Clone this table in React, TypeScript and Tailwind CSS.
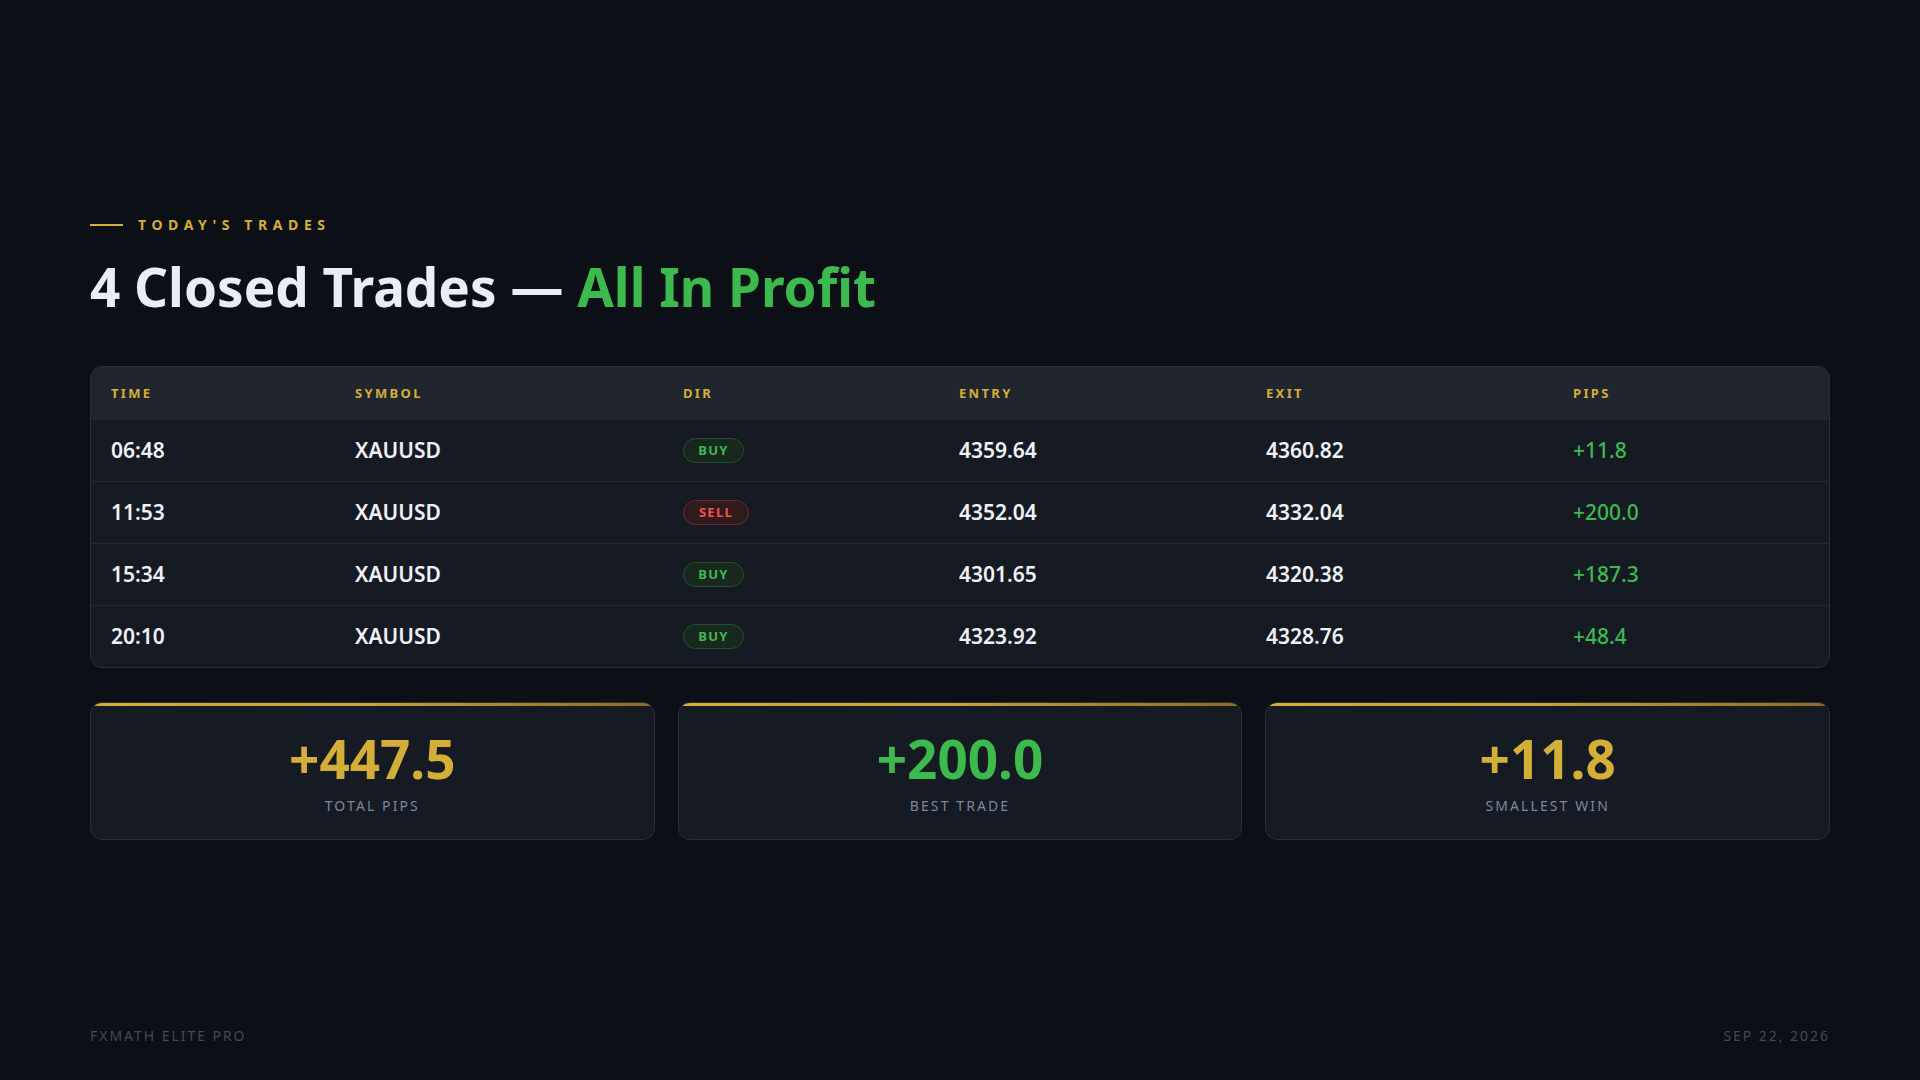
import React from "react";

type Trade = {
  time: string;
  symbol: string;
  dir: "BUY" | "SELL";
  entry: string;
  exit: string;
  pips: string;
};

const trades: Trade[] = [
  { time: "06:48", symbol: "XAUUSD", dir: "BUY", entry: "4359.64", exit: "4360.82", pips: "+11.8" },
  { time: "11:53", symbol: "XAUUSD", dir: "SELL", entry: "4352.04", exit: "4332.04", pips: "+200.0" },
  { time: "15:34", symbol: "XAUUSD", dir: "BUY", entry: "4301.65", exit: "4320.38", pips: "+187.3" },
  { time: "20:10", symbol: "XAUUSD", dir: "BUY", entry: "4323.92", exit: "4328.76", pips: "+48.4" },
];

const cols = "grid grid-cols-[244px_328px_276px_307px_307px_1fr] px-5";

const DirPill = ({ dir }: { dir: Trade["dir"] }) =>
  dir === "BUY" ? (
    <span className="flex h-[25px] w-[61px] items-center justify-center rounded-full border border-[#24502f] bg-[#17291e] text-[13px] font-bold tracking-[0.1em] text-[#3fb950]">
      BUY
    </span>
  ) : (
    <span className="flex h-[25px] w-[66px] items-center justify-center rounded-full border border-[#6a2a2d] bg-[#2f1a1d] text-[13px] font-bold tracking-[0.1em] text-[#f85149]">
      SELL
    </span>
  );

const StatCard = ({ value, label, color }: { value: string; label: string; color: string }) => (
  <div className="relative flex h-[138px] flex-col items-center justify-center overflow-hidden rounded-xl border border-[#282d37] bg-[#161a22] pt-[6px]">
    <div className="absolute inset-x-0 top-0 h-[3px] bg-gradient-to-r from-[#d4af37] via-[#c9a232] to-[#8a6d1f]" />
    <div className={`text-[53px] leading-none font-bold ${color}`}>{value}</div>
    <div className="mt-[10px] text-[14px] tracking-[0.15em] text-[#7d889b]">{label}</div>
  </div>
);

export default function App() {
  return (
    <div className="flex h-[1080px] w-[1920px] flex-col bg-[#0c0f16] px-[90px] font-['Noto_Sans',sans-serif]">
      <main className="pt-[214px]">
        <div className="flex items-center gap-[15px]">
          <div className="h-[2px] w-[33px] bg-[#d4af37]" />
          <span className="text-[14px] font-bold tracking-[0.4em] text-[#d4af37]">TODAY'S TRADES</span>
        </div>

        <h1 className="mt-[25px] text-[53px] leading-none font-bold text-[#e9eef6]">
          4 Closed Trades — <span className="text-[#3dba4e]">All In Profit</span>
        </h1>

        <div className="mt-[53px] overflow-hidden rounded-xl border border-[#282d37] bg-[#161a22]">
          <div className={`${cols} h-[53px] items-center bg-[#21252e] text-[13px] font-bold tracking-[0.18em] text-[#d4af37]`}>
            <div>TIME</div>
            <div>SYMBOL</div>
            <div>DIR</div>
            <div>ENTRY</div>
            <div>EXIT</div>
            <div>PIPS</div>
          </div>
          {trades.map((t, i) => (
            <div
              key={t.time}
              className={`${cols} items-center text-[21px] font-semibold text-[#eef2f8] ${i > 0 ? "h-[62px] border-t border-[#242933]" : "h-[61px]"}`}
            >
              <div>{t.time}</div>
              <div>{t.symbol}</div>
              <div className="flex items-center">
                <DirPill dir={t.dir} />
              </div>
              <div>{t.entry}</div>
              <div>{t.exit}</div>
              <div className="font-medium text-[#3dba4e]">{t.pips}</div>
            </div>
          ))}
        </div>

        <div className="mt-[34px] grid grid-cols-3 gap-[23px]">
          <StatCard value="+447.5" label="TOTAL PIPS" color="text-[#d4af37]" />
          <StatCard value="+200.0" label="BEST TRADE" color="text-[#3dba4e]" />
          <StatCard value="+11.8" label="SMALLEST WIN" color="text-[#d4af37]" />
        </div>
      </main>

      <footer className="mt-auto flex justify-between pb-[34px] text-[14px] tracking-[0.14em] text-[#434955]">
        <span>FXMATH ELITE PRO</span>
        <span>SEP 22, 2026</span>
      </footer>
    </div>
  );
}
